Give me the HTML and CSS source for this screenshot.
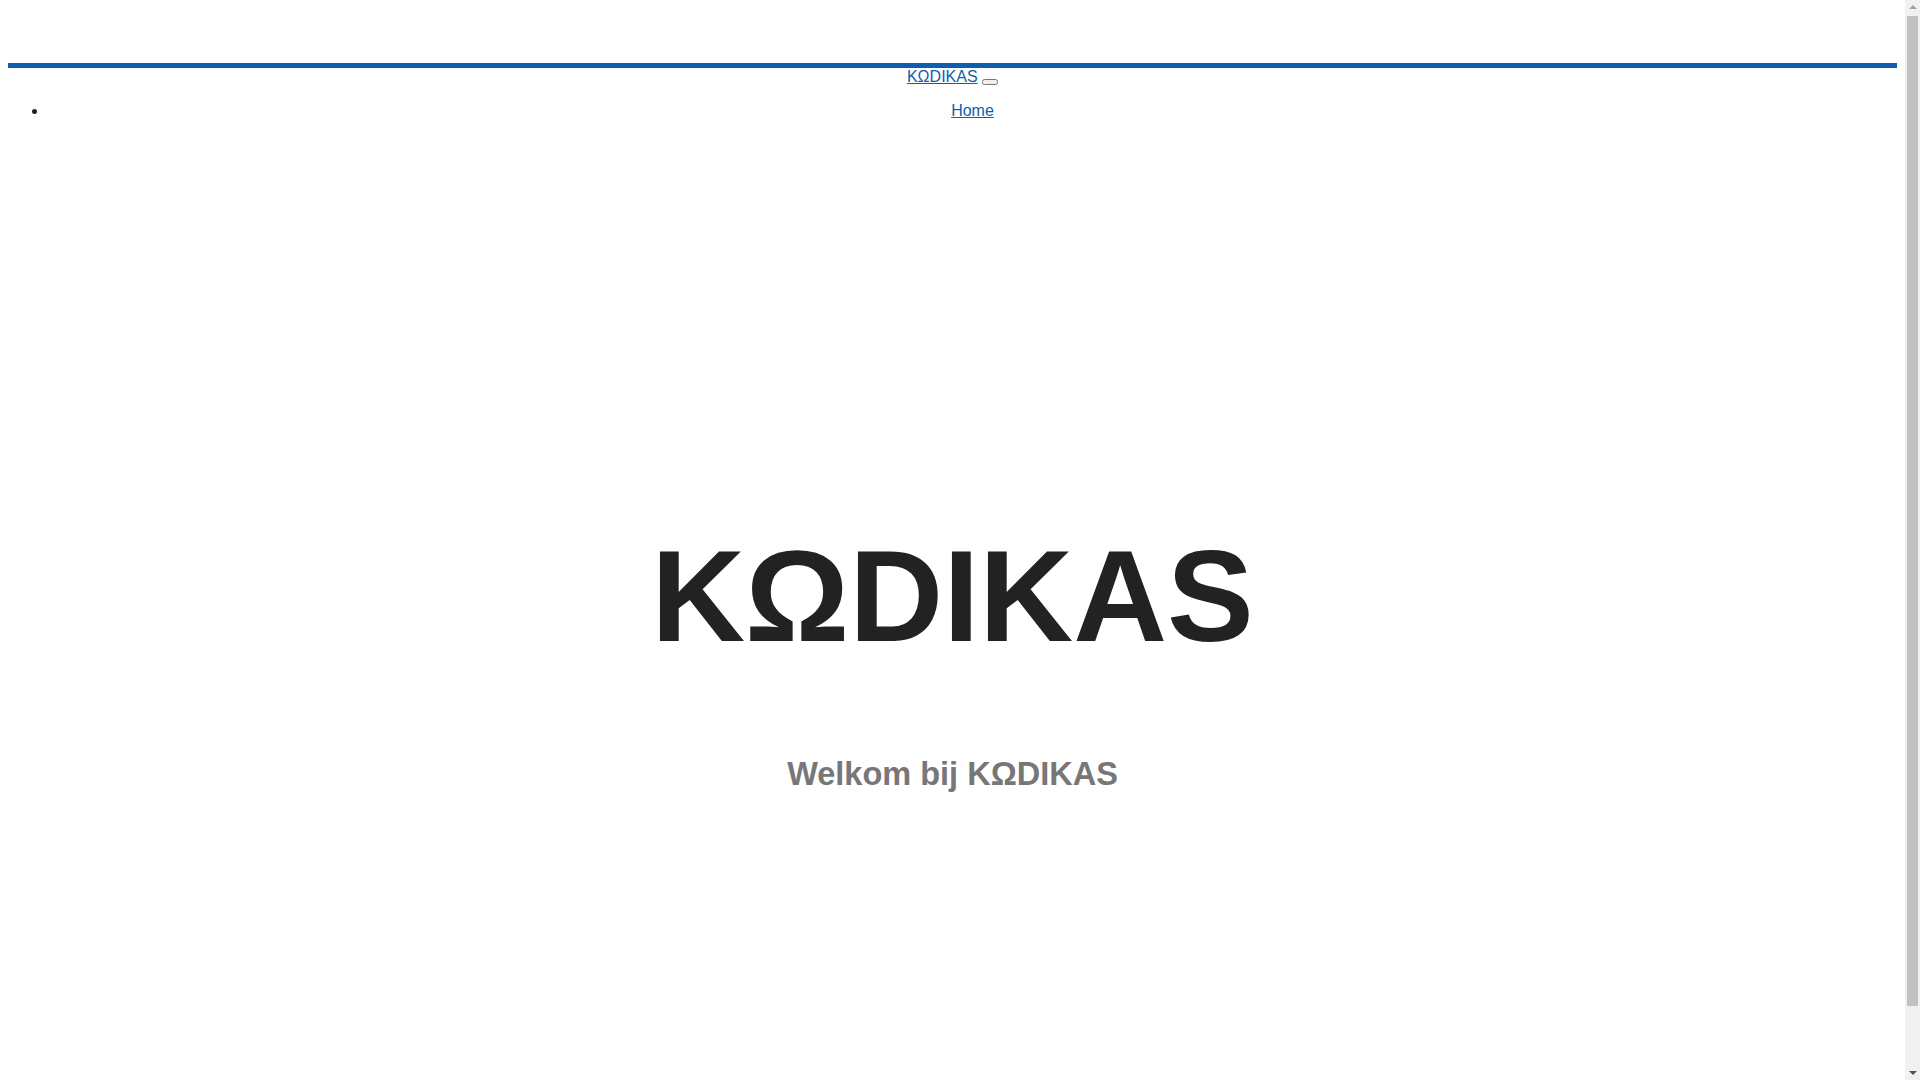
FILE: index.html
```html
<!DOCTYPE html>
<html lang="nl">
<head>
<meta charset="utf-8">
<title>KΩDIKAS</title>
<link rel="stylesheet" href="styles.css">
</head>
<body>
<header class="site-header"></header>
<nav class="navbar">
  <div class="brand-line"><a class="brand" href="#">KΩDIKAS</a> <button class="toggler" type="button"></button></div>
  <ul class="menu">
    <li><a href="#">Home</a></li>
  </ul>
</nav>
<section class="hero">
  <h1 class="hero-title">KΩDIKAS</h1>
  <h2 class="hero-sub">Welkom bij KΩDIKAS</h2>
</section>
<div class="fake-scrollbar" aria-hidden="true">
  <span class="arrow arrow-up"></span>
  <span class="thumb"></span>
  <span class="arrow arrow-down"></span>
</div>
</body>
</html>
```

FILE: styles.css
```css
html, body {
  font-family: "Liberation Sans", Arial, sans-serif;
  font-size: 16px;
}
body {
  margin: 8px 23px 8px 8px;
  background: #ffffff;
  color: #222222;
}
a {
  color: #0d5eaf;
}
.site-header {
  height: 55px;
  border-bottom: 5px solid #0f5ead;
}
.navbar {
  text-align: center;
}
.brand-line {
  line-height: normal;
}
.toggler {
  vertical-align: baseline;
}
.menu {
  margin: 16px 0;
  padding-left: 40px;
}
.hero {
  text-align: center;
  padding-top: 385px;
  padding-bottom: 360px;
}
.hero-title {
  margin: 0;
  font-size: 130px;
  font-weight: bold;
  color: #222222;
}
.hero-sub {
  margin: 85px 0 0;
  font-size: 32.5px;
  font-weight: bold;
  color: #777777;
}
.fake-scrollbar {
  position: fixed;
  top: 0;
  right: 0;
  width: 15px;
  height: 100vh;
  background: #f1f1f1;
  display: flex;
  flex-direction: column;
  align-items: center;
}
.arrow {
  width: 0;
  height: 0;
  border-left: 4px solid transparent;
  border-right: 4px solid transparent;
  margin: 5px 0;
}
.arrow-up {
  border-bottom: 4px solid #a3a3a3;
}
.arrow-down {
  border-top: 4px solid #505050;
}
.thumb {
  width: 11px;
  flex: 1;
  margin: 2px 0 60px;
  background: #c1c1c1;
  border-radius: 0;
}
```
